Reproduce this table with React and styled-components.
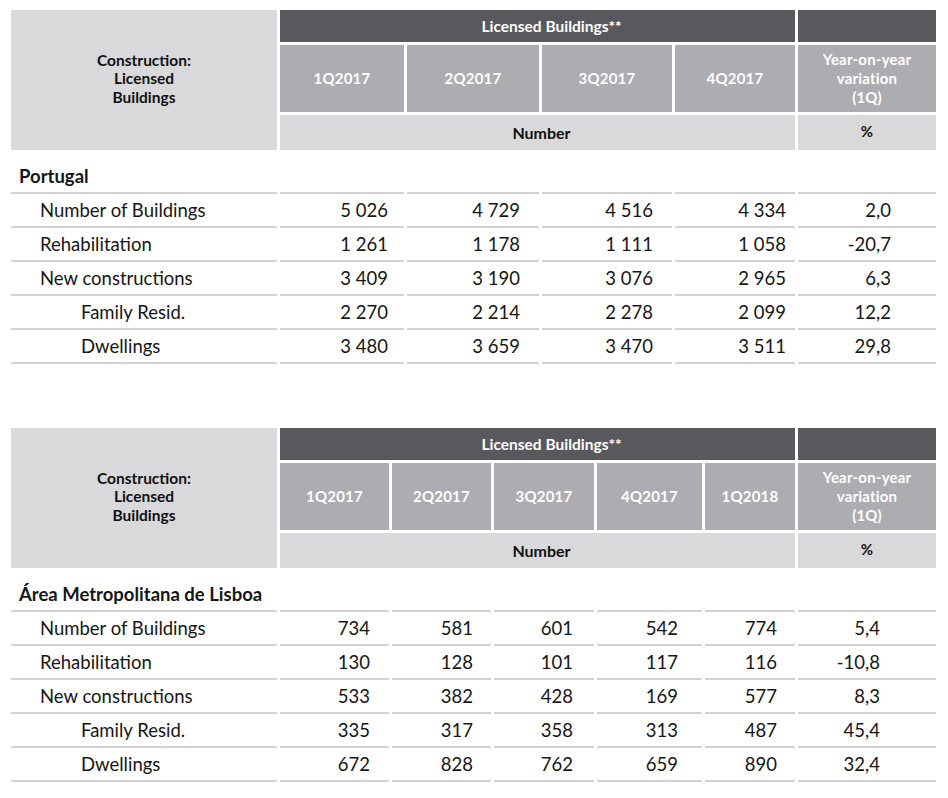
import React from "react";
import styled, { createGlobalStyle } from "styled-components";

const Global = createGlobalStyle`
  html, body { margin: 0; padding: 0; background: #ffffff; }
  body { font-family: Lato, "Open Sans", sans-serif; color: #1a1a1a; }
`;

const Page = styled.main`
  padding: 10px 12px 0 11px;
  display: flex;
  flex-direction: column;
  gap: 64px;
`;

const TableBlock = styled.section`
  display: flex;
  flex-direction: column;
`;

const HeaderGrid = styled.div`
  display: grid;
  grid-template-columns: ${(p) => p.$cols};
  grid-template-rows: 32px 67px 35px;
  column-gap: 3px;
  row-gap: 3px;
`;

const Corner = styled.div`
  grid-row: 1 / 4;
  grid-column: 1;
  background: #d9d9dc;
  display: flex;
  align-items: center;
  justify-content: center;
  text-align: center;
  font-weight: 700;
  font-size: 15.5px;
  line-height: 18.5px;
  color: #111;
  padding-bottom: 3px;
`;

const TitleBar = styled.div`
  grid-row: 1;
  grid-column: ${(p) => p.$span};
  background: #59585c;
  color: #ffffff;
  font-weight: 700;
  font-size: 15.5px;
  display: flex;
  align-items: center;
  justify-content: center;
  padding-left: ${(p) => p.$offset || 0}px;
`;

const Period = styled.div`
  grid-row: 2;
  background: #adacb0;
  color: #ffffff;
  font-weight: 700;
  font-size: 15px;
  line-height: 19px;
  letter-spacing: 0.2px;
  display: flex;
  align-items: center;
  justify-content: center;
  text-align: center;
`;

const Unit = styled.div`
  grid-row: 3;
  grid-column: ${(p) => p.$span};
  background: #d9d9dc;
  color: #111;
  font-weight: 700;
  font-size: ${(p) => (p.$top ? 15 : 16)}px;
  display: flex;
  align-items: ${(p) => (p.$top ? "flex-start" : "center")};
  padding-top: ${(p) => (p.$top ? 7 : 0)}px;
  justify-content: center;
  padding-left: ${(p) => p.$offset || 0}px;
`;

const BodyGrid = styled.div`
  display: grid;
  grid-template-columns: ${(p) => p.$cols};
  column-gap: 3px;
`;

const Cell = styled.div`
  box-sizing: border-box;
  height: ${(p) => (p.$region ? 44 : 34)}px;
  border-bottom: 2px solid #d2d2d4;
  display: flex;
  align-items: ${(p) => (p.$region ? "flex-end" : "center")};
  font-size: 18.5px;
  color: #161616;
`;

const RegionLabel = styled(Cell)`
  font-weight: 700;
  padding-left: 8px;
  padding-bottom: 5px;
`;

const RowLabel = styled(Cell)`
  padding-left: ${(p) => (p.$level === 2 ? 70 : 29)}px;
`;

const Value = styled(Cell)`
  justify-content: flex-end;
  padding-right: ${(p) => p.$pad}px;
`;

const rowLabels = [
  ["Number of Buildings", 1],
  ["Rehabilitation", 1],
  ["New constructions", 1],
  ["Family Resid.", 2],
  ["Dwellings", 2],
];

const tables = [
  {
    cols: "266px 124px 132px 130px 120px 138px",
    periods: ["1Q2017", "2Q2017", "3Q2017", "4Q2017"],
    pads: [16, 19, 19, 9, 45],
    region: "Portugal",
    rows: [
      ["5 026", "4 729", "4 516", "4 334", "2,0"],
      ["1 261", "1 178", "1 111", "1 058", "-20,7"],
      ["3 409", "3 190", "3 076", "2 965", "6,3"],
      ["2 270", "2 214", "2 278", "2 099", "12,2"],
      ["3 480", "3 659", "3 470", "3 511", "29,8"],
    ],
  },
  {
    cols: "266px 109px 99px 100px 105px 90px 138px",
    periods: ["1Q2017", "2Q2017", "3Q2017", "4Q2017", "1Q2018"],
    pads: [19, 18, 21, 24, 18, 56],
    region: "Área Metropolitana de Lisboa",
    rows: [
      ["734", "581", "601", "542", "774", "5,4"],
      ["130", "128", "101", "117", "116", "-10,8"],
      ["533", "382", "428", "169", "577", "8,3"],
      ["335", "317", "358", "313", "487", "45,4"],
      ["672", "828", "762", "659", "890", "32,4"],
    ],
  },
];

function DataTable({ t }) {
  const n = t.periods.length;
  const spanNum = `2 / ${n + 2}`;
  const lastCol = `${n + 2}`;
  return (
    <TableBlock>
      <HeaderGrid $cols={t.cols}>
        <Corner>
          Construction:
          <br />
          Licensed
          <br />
          Buildings
        </Corner>
        <TitleBar $span={spanNum} $offset={28}>
          Licensed Buildings**
        </TitleBar>
        <TitleBar $span={lastCol} />
        {t.periods.map((p) => (
          <Period key={p}>{p}</Period>
        ))}
        <Period>
          Year-on-year
          <br />
          variation
          <br />
          (1Q)
        </Period>
        <Unit $span={spanNum} $offset={8}>
          Number
        </Unit>
        <Unit $span={lastCol} $top>
          %
        </Unit>
      </HeaderGrid>
      <BodyGrid $cols={t.cols}>
        <RegionLabel $region>{t.region}</RegionLabel>
        {t.pads.map((_, i) => (
          <Cell key={`r${i}`} $region />
        ))}
        {t.rows.map((row, ri) => (
          <React.Fragment key={ri}>
            <RowLabel $level={rowLabels[ri][1]}>{rowLabels[ri][0]}</RowLabel>
            {row.map((v, ci) => (
              <Value key={ci} $pad={t.pads[ci]}>
                {v}
              </Value>
            ))}
          </React.Fragment>
        ))}
      </BodyGrid>
    </TableBlock>
  );
}

export default function App() {
  return (
    <>
      <Global />
      <Page>
        {tables.map((t, i) => (
          <DataTable key={i} t={t} />
        ))}
      </Page>
    </>
  );
}
